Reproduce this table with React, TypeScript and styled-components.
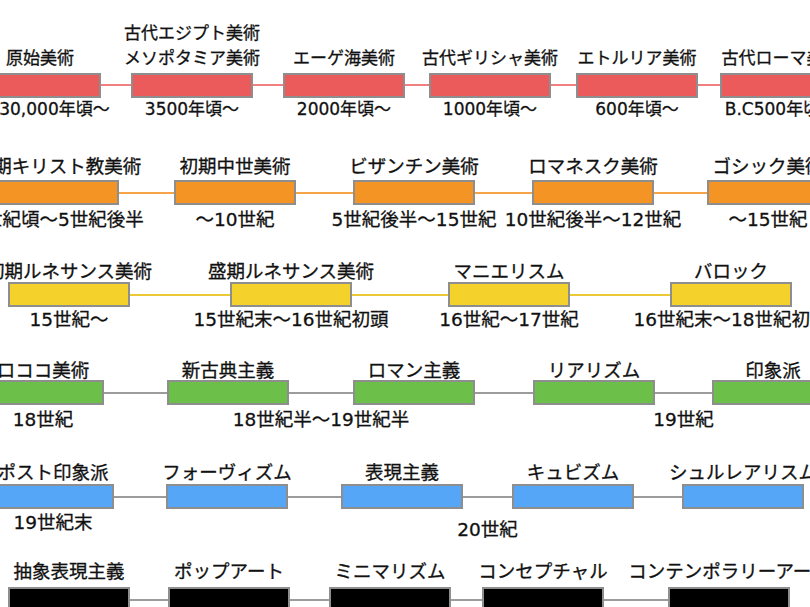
import React from 'react';
import styled, { createGlobalStyle } from 'styled-components';

type Period = { kind: 'period'; title: string[]; date?: string };
type Link = { kind: 'link'; width: number; date?: string; shift?: number };
type Item = Period | Link;

interface LaneConfig {
    offset: number;
    top: number;
    fill: string;
    line: string;
    fontSize: number;
    lineHeight: number;
    titleLines: number;
    titleGap: number;
    dateGap: number;
    items: Item[];
}

const BAR_WIDTH = 122;
const BAR_HEIGHT = 25;

const GlobalStyle = createGlobalStyle`
    html, body {
        margin: 0;
        padding: 0;
        background: #ffffff;
        overflow: hidden;
    }
    body {
        font-family: "DejaVu Sans", "Noto Sans CJK JP", sans-serif;
        color: #111111;
        -webkit-text-stroke: 0.3px #111111;
    }
`;

const Chart = styled.div`
    width: 810px;
    height: 607px;
    overflow: hidden;
    display: flex;
    flex-direction: column;
`;

const Lane = styled.div<{ $offset: number; $top: number; $size: number }>`
    display: flex;
    flex: none;
    margin-top: ${p => p.$top}px;
    margin-left: ${p => p.$offset}px;
    font-size: ${p => p.$size}px;
`;

const PeriodCol = styled.div`
    flex: none;
    width: ${BAR_WIDTH}px;
    display: flex;
    flex-direction: column;
`;

const LinkCol = styled.div<{ $width: number }>`
    flex: none;
    width: ${p => p.$width}px;
    display: flex;
    flex-direction: column;
`;

const Title = styled.div<{ $lines: number; $lh: number }>`
    height: ${p => p.$lines * p.$lh}px;
    line-height: ${p => p.$lh}px;
    display: flex;
    flex-direction: column;
    justify-content: flex-end;
    align-items: center;
    white-space: nowrap;
`;

const Bar = styled.div<{ $fill: string; $gap: number }>`
    box-sizing: border-box;
    height: ${BAR_HEIGHT}px;
    margin-top: ${p => p.$gap}px;
    background: ${p => p.$fill};
    border: 2px solid #8e8e8e;
`;

const Track = styled.div<{ $gap: number }>`
    height: ${BAR_HEIGHT}px;
    margin-top: ${p => p.$gap}px;
    display: flex;
    align-items: center;
`;

const Line = styled.div<{ $color: string }>`
    width: 100%;
    height: 2px;
    background: ${p => p.$color};
`;

const DateText = styled.div<{ $gap: number }>`
    height: 22px;
    line-height: 22px;
    margin-top: ${p => p.$gap}px;
    display: flex;
    justify-content: center;
    white-space: nowrap;
`;

const p = (title: string | string[], date?: string): Period => ({
    kind: 'period',
    title: Array.isArray(title) ? title : [title],
    date,
});
const l = (width: number, date?: string, shift?: number): Link => ({ kind: 'link', width, date, shift });

const lanes: LaneConfig[] = [
    {
        offset: -21, top: 20.5, fill: '#ec5b5b', line: '#f08080', fontSize: 17,
        lineHeight: 25, titleLines: 2, titleGap: 2, dateGap: 0,
        items: [
            p('原始美術', 'B.C30,000年頃〜'), l(30),
            p(['古代エジプト美術', 'メソポタミア美術'], '3500年頃〜'), l(30),
            p('エーゲ海美術', '2000年頃〜'), l(24),
            p('古代ギリシャ美術', '1000年頃〜'), l(25),
            p('エトルリア美術', '600年頃〜'), l(22),
            p('古代ローマ美術', 'B.C500年頃〜'),
        ],
    },
    {
        offset: -3, top: 36.5, fill: '#f39424', line: '#f5a447', fontSize: 18.5,
        lineHeight: 22, titleLines: 1, titleGap: 2, dateGap: 4,
        items: [
            p('初期キリスト教美術', '3世紀頃〜5世紀後半'), l(55),
            p('初期中世美術', '〜10世紀'), l(57),
            p('ビザンチン美術', '5世紀後半〜15世紀'), l(57),
            p('ロマネスク美術', '10世紀後半〜12世紀'), l(53),
            p('ゴシック美術', '〜15世紀'),
        ],
    },
    {
        offset: 8, top: 30, fill: '#f5d12c', line: '#ebc935', fontSize: 18.5,
        lineHeight: 22, titleLines: 1, titleGap: -1, dateGap: 2,
        items: [
            p('初期ルネサンス美術', '15世紀〜'), l(100),
            p('盛期ルネサンス美術', '15世紀末〜16世紀初頭'), l(96),
            p('マニエリスム', '16世紀〜17世紀'), l(100),
            p('バロック', '16世紀末〜18世紀初頭'),
        ],
    },
    {
        offset: -18, top: 29, fill: '#6cc04a', line: '#9c9c9c', fontSize: 18.5,
        lineHeight: 22, titleLines: 1, titleGap: -2, dateGap: 4,
        items: [
            p('ロココ美術', '18世紀'), l(63),
            p('新古典主義'), l(64, '18世紀半〜19世紀半'),
            p('ロマン主義'), l(58),
            p('リアリズム'), l(57, '19世紀'),
            p('印象派'),
        ],
    },
    {
        offset: -8, top: 31, fill: '#55a6f6', line: '#9c9c9c', fontSize: 18.5,
        lineHeight: 22, titleLines: 1, titleGap: 0, dateGap: 3,
        items: [
            p('ポスト印象派', '19世紀末'), l(52),
            p('フォーヴィズム'), l(53),
            p('表現主義'), l(49, '20世紀', 7),
            p('キュビズム'), l(48),
            p('シュルレアリスム'),
        ],
    },
    {
        offset: 8, top: 20, fill: '#000000', line: '#9c9c9c', fontSize: 18.5,
        lineHeight: 22, titleLines: 1, titleGap: 4, dateGap: 4,
        items: [
            p('抽象表現主義'), l(38),
            p('ポップアート'), l(39),
            p('ミニマリズム'), l(31),
            p('コンセプチャル'), l(64),
            p('コンテンポラリーアート'),
        ],
    },
];

const TimelineLane: React.FC<{ lane: LaneConfig }> = ({ lane }) => (
    <Lane $offset={lane.offset} $top={lane.top} $size={lane.fontSize}>
        {lane.items.map((item, i) =>
            item.kind === 'period' ? (
                <PeriodCol key={i}>
                    <Title $lines={lane.titleLines} $lh={lane.lineHeight}>
                        {item.title.map(t => (
                            <span key={t}>{t}</span>
                        ))}
                    </Title>
                    <Bar $fill={lane.fill} $gap={lane.titleGap} />
                    <DateText $gap={lane.dateGap}>{item.date}</DateText>
                </PeriodCol>
            ) : (
                <LinkCol key={i} $width={item.width}>
                    <Title $lines={lane.titleLines} $lh={lane.lineHeight} />
                    <Track $gap={lane.titleGap}>
                        <Line $color={lane.line} />
                    </Track>
                    <DateText $gap={lane.dateGap + (item.shift ?? 0)}>{item.date}</DateText>
                </LinkCol>
            )
        )}
    </Lane>
);

export default function App() {
    return (
        <>
            <GlobalStyle />
            <Chart>
                {lanes.map((lane, i) => (
                    <TimelineLane key={i} lane={lane} />
                ))}
            </Chart>
        </>
    );
}
